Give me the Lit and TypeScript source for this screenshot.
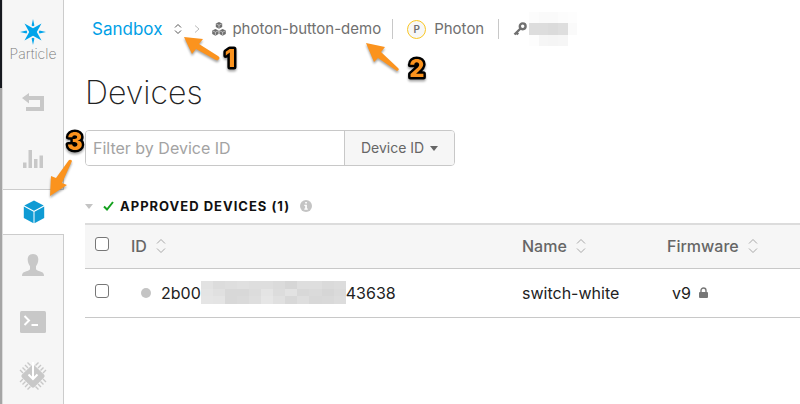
import { LitElement, html, css } from "lit";
import { customElement, property } from "lit/decorators.js";

type Cell = { tone: number };

const particleStar = html`<svg viewBox="0 0 26 26" width="26" height="26" fill="#00a4ea" aria-hidden="true">
  <path d="M4.500 4.500 13 9.200 21.500 4.500 16.800 13 21.500 21.500 13 16.800 4.500 21.500 9.200 13z"/>
  <path d="M13 0l1.400 6.500q-1.400 1.500-2.800 0zM13 26l1.400-6.500q-1.400-1.500-2.800 0zM0 13l6.500-1.400q1.500 1.400 0 2.800zM26 13l-6.500-1.400q-1.500 1.400 0 2.800z"/>
</svg>`;

const icons = {
  back: html`<svg viewBox="0 0 22 18" width="22" height="18" fill="#c8c8c8"><path d="M0 5 7 0v3h15v15H4v-4h14V7H7v3.500z"/></svg>`,
  chart: html`<svg viewBox="0 0 20 18" width="20" height="18" fill="#c8c8c8"><path d="M0 12.500h3.500V18H0zM5.500 0h3.500v18H5.500zM11 9h3.500v9H11zM16.500 5.500H20V18h-3.500z"/></svg>`,
  cube: html`<svg viewBox="0 0 22 24" width="22" height="24" fill="#0f9bd4"><path d="M11 .5 20.700 5.600 11 10.800 1.300 5.600zM.8 6.600 10.500 11.800V23.300L.8 18zM21.200 6.600 11.500 11.800V23.300L21.200 18z"/></svg>`,
  user: html`<svg viewBox="0 0 22 22" width="22" height="22" fill="#c8c8c8"><path d="M11 0c3.500 0 5.300 2.200 5.300 5.500 0 2.800-1 5-2.300 6.700v3c.5 1.200 3 1.800 5.500 2.800 1.800.7 2.500 1.800 2.500 4H0c0-2.200.7-3.300 2.500-4 2.500-1 5-1.600 5.500-2.800v-3C6.700 10.500 5.700 8.300 5.700 5.500 5.700 2.200 7.500 0 11 0z"/></svg>`,
  terminal: html`<svg viewBox="0 0 26 22" width="26" height="22"><rect width="26" height="22" rx="1.500" fill="#c8c8c8"/><path d="M4.500 5 9 9.500 4.500 14M11.500 14H18" fill="none" stroke="#fff" stroke-width="2"/></svg>`,
  chip: html`<svg viewBox="0 0 30 30" width="30" height="30"><path d="M13.500 4.500Q15 3 16.500 4.500L26 13.500Q27.500 15 26 16.500L16.500 26Q15 27.500 13.500 26L4 16.500Q2.500 15 4 13.500z" fill="#c8c8c8"/><path stroke="#c8c8c8" stroke-width="1.400" d="M9.500 1.500 12.500 4.500M7 4l3 3M4.500 6.500l3 3M2 9l3 3M20.500 1.500l-3 3M23 4l-3 3M25.500 6.500l-3 3M28 9l-3 3M9.500 28.500l3-3M7 26l3-3M4.500 23.500l3-3M2 21l3-3M20.500 28.500l-3-3M23 26l-3-3M25.500 23.500l-3-3M28 21l-3-3"/><path d="M15 1v16M10.500 13.500 15 18l4.500-4.500" fill="none" stroke="#fff" stroke-width="2"/></svg>`,
};

const arrowShape = (d: string, w: number, h: number) =>
  html`<svg viewBox="0 0 ${w} ${h}" width=${w} height=${h} fill="#fb931e" aria-hidden="true"><path d=${d}/></svg>`;

const sorter = html`<svg viewBox="0 0 10 16" width="10" height="16" fill="none" stroke="#a8a8a8" stroke-width="1" aria-hidden="true"><path d="M1 5.500 5 1.500 9 5.500M1 10.500 5 14.500 9 10.500"/></svg>`;

const cubelets = html`<svg viewBox="0 0 14 14" width="14" height="14" aria-hidden="true">
  <path fill="#6f6f6f" d="M7 0l3.200 1.500v3.600L7 6.800 3.800 5.100V1.500zM3.400 6.900l3.200 1.500V12l-3.200 1.700L.2 12V8.400zM10.600 6.900l3.200 1.500V12l-3.200 1.700L7.400 12V8.400z"/>
  <path fill="none" stroke="#fff" stroke-width=".5" d="M4.300 2 7 3.300 9.700 2M7 3.300v3M.7 8.900l2.700 1.300 2.700-1.300M3.400 10.200v3M7.900 8.900l2.700 1.300 2.700-1.300M10.600 10.200v3"/>
</svg>`;

@customElement("redacted-block")
export class RedactedBlock extends LitElement {
  @property({ attribute: false }) cells: Cell[] = [];
  @property({ type: Number }) columns = 1;
  static styles = css`
    :host { display: block; }
    .mosaic { display: grid; height: 100%; }
  `;
  render() {
    return html`<div class="mosaic" style="grid-template-columns:repeat(${this.columns},1fr)">
      ${this.cells.map((c) => html`<span style="background:rgb(${c.tone},${c.tone},${c.tone})"></span>`)}
    </div>`;
  }
}

@customElement("callout-mark")
export class CalloutMark extends LitElement {
  @property() number = "";
  static styles = css`
    :host { display: block; }
    svg { display: block; overflow: visible; }
    text {
      font: 800 24px Inter, sans-serif;
      fill: #fb931e; stroke: #000; stroke-width: 5px; stroke-linejoin: round; paint-order: stroke;
    }
  `;
  render() {
    return html`<svg width="18" height="26" viewBox="0 0 18 26"><text x="9" y="21" text-anchor="middle">${this.number}</text></svg>`;
  }
}

const tones = (list: number[]): Cell[] => list.map((tone) => ({ tone }));
const idMosaic = tones([
  226, 220, 222, 224, 222, 222, 219, 214, 222, 222, 218, 220,
  228, 224, 216, 216, 220, 228, 220, 226, 216, 218, 214, 218,
  229, 228, 216, 218, 222, 230, 224, 216, 222, 216, 217, 220,
]);
const keyMosaic = tones([
  252, 250, 250, 252, 253,
  221, 221, 219, 222, 250,
  253, 246, 245, 246, 255,
]);

@customElement("app-root")
export class AppRoot extends LitElement {
  static styles = css`
    :host {
      display: block; position: relative; min-height: 100vh; overflow: hidden;
      background: #fff; color: #222; font: 15px/20px Inter, "Noto Sans", sans-serif;
    }
    * { box-sizing: border-box; }
    svg { display: block; flex: none; }
    .shell { display: flex; min-height: 100vh; }
    .edge { flex: none; width: 2px; background: linear-gradient(#16191f 0 88px, #a5a5a5 88px); }
    .rail {
      flex: none; width: 62px; display: flex; flex-direction: column;
      background: #f6f6f6; border-right: 1px solid #ccc; border-left: 1px solid #dcdcdc;
    }
    .brand {
      display: flex; flex-direction: column; align-items: center; padding-top: 19px; height: 75px;
      color: #777; font: 200 14px/18px Inter, sans-serif; text-decoration: none;
    }
    .nav {
      display: flex; align-items: center; justify-content: center; height: 54px;
      border: 0; padding: 0; background: none;
    }
    .nav.tall { height: 60px; }
    .nav.active { height: 46px; margin-right: -1px; background: #fff; border: solid #ccc; border-width: 1px 0; }
    main { flex: 1; min-width: 0; padding: 14px 0 0 21px; }
    .crumbs { display: flex; align-items: center; height: 30px; color: #707070; }
    .team { display: flex; align-items: center; gap: 12px; padding: 0 0 0 7px; border: 0; background: none; color: #00a0e6; font: 400 17px/20px Inter, sans-serif; }
    .next { margin: 0 12px; }
    .product { display: flex; align-items: center; gap: 6px; color: #707070; text-decoration: none; }
    .bar { width: 1px; height: 20px; background: #c8c8c8; }
    .platform { display: flex; align-items: center; gap: 8px; padding: 0 14px; }
    .badge { width: 19px; height: 19px; border: 1px solid #f9c623; border-radius: 50%; background: #f7f7f7; font: 600 10px/17px Inter, sans-serif; text-align: center; }
    .bar.first { margin-left: 11px; }
    .key { display: flex; align-items: center; gap: 2px; padding-left: 14px; }
    .key redacted-block { width: 48px; height: 34px; }
    h1 { margin: 29px 0 0; color: #222; font: 200 32px/40px Inter, sans-serif; }
    .filter { display: flex; width: 370px; height: 36px; margin-top: 17px; border: 1px solid #c8c8c8; border-radius: 4px; overflow: hidden; }
    .filter input { flex: 1; min-width: 0; border: 0; padding: 0 7px; outline: 0; background: #fff; font: 16px/20px Inter, sans-serif; }
    .filter input::placeholder { color: #a3a3a3; opacity: 1; }
    .pick { position: relative; display: flex; width: 110px; border-left: 1px solid #c8c8c8; background: #f6f6f6; }
    .pick select { appearance: none; width: 100%; border: 0; padding: 0 16px; background: none; color: #666; font: 14px/20px Inter, sans-serif; }
    .pick svg { position: absolute; right: 16px; top: 15px; pointer-events: none; }
    .group { display: flex; align-items: center; gap: 10px; margin-top: 31px; height: 18px; }
    .group h2 { margin: 0; color: #111; font: 700 13px/18px Inter, sans-serif; letter-spacing: 1px; }
    .group .tick { margin-right: -4px; }
    .fold { display: flex; border: 0; padding: 0; background: none; }
    table { width: 100%; margin-top: 8px; border-collapse: collapse; table-layout: fixed; font-size: 16px; }
    th, td { padding: 0; text-align: left; border-bottom: 1px solid #c8c8c8; }
    th { height: 44px; background: #f6f6f6; border-top: 2px solid #dcdcdc; color: #666; font-weight: 500; }
    td { height: 49px; }
    .select { width: 46px; }
    .name { width: 145px; }
    .firmware { width: 133px; }
    .head, .row { display: flex; align-items: center; }
    .head { gap: 9px; }
    .dot { width: 10px; height: 10px; margin: 0 10px; border-radius: 50%; background: #c4c4c4; }
    .row redacted-block { width: 145px; height: 23px; }
    .version { gap: 8px; padding-left: 5px; }
    input[type="checkbox"] { appearance: none; display: block; width: 14px; height: 14px; margin: 0 0 4px 10px; border: 1px solid #777; border-radius: 3px; background: #fff; }
    .mark { position: absolute; pointer-events: none; filter: drop-shadow(0 2px 1px rgba(0, 0, 0, 0.35)); }
    .one { left: 184px; top: 37px; }
    .two { left: 366px; top: 43px; }
    .three { left: 50px; top: 159px; }
    .n1 { left: 221px; top: 46px; }
    .n2 { left: 408px; top: 56px; }
    .n3 { left: 66px; top: 129px; }
  `;

  render() {
    return html`
      <div class="shell">
        <div class="edge"></div>
        <nav class="rail">
          <a class="brand" href="#">${particleStar}<span>Particle</span></a>
          <button class="nav" aria-label="Back">${icons.back}</button>
          <button class="nav tall" aria-label="Analytics">${icons.chart}</button>
          <button class="nav active" aria-label="Devices">${icons.cube}</button>
          <button class="nav tall" aria-label="Team">${icons.user}</button>
          <button class="nav" aria-label="Console">${icons.terminal}</button>
          <button class="nav" aria-label="Firmware">${icons.chip}</button>
        </nav>
        <main>
          <div class="crumbs">
            <button class="team">Sandbox
              <svg viewBox="0 0 8 12" width="8" height="12" fill="none" stroke="#555"><path d="M1 4.500 4 1.500 7 4.500M1 7.500 4 10.500 7 7.500"/></svg>
            </button>
            <svg class="next" viewBox="0 0 6 8" width="6" height="8" fill="none" stroke="#bbb"><path d="M1 .5 5 4 1 7.500"/></svg>
            <a class="product" href="#">${cubelets}<span>photon-button-demo</span></a>
            <span class="bar first"></span>
            <span class="platform"><span class="badge">P</span>Photon</span>
            <span class="bar"></span>
            <span class="key">
              <svg viewBox="0 0 14 14" width="14" height="14" aria-hidden="true"><circle cx="9.700" cy="4.300" r="2.900" fill="none" stroke="#707070" stroke-width="2.400"/><path d="M7.500 6.500 1.500 12.500M3.400 10.600l1.800 1.800" stroke="#707070" stroke-width="2.400" fill="none"/></svg>
              <redacted-block .cells=${keyMosaic} .columns=${5}></redacted-block>
            </span>
          </div>
          <h1>Devices</h1>
          <div class="filter">
            <input type="text" aria-label="Filter by Device ID" placeholder="Filter by Device ID" />
            <div class="pick">
              <select aria-label="Filter field"><option>Device ID</option></select>
              <svg viewBox="0 0 8 5" width="8" height="5" fill="#666"><path d="M0 0h8L4 5z"/></svg>
            </div>
          </div>
          <div class="group">
            <button class="fold" aria-label="Collapse"><svg viewBox="0 0 8 5" width="8" height="5" fill="#c4c4c4"><path d="M0 0h8L4 5z"/></svg></button>
            <svg class="tick" viewBox="0 0 11 10" width="11" height="10" fill="none" stroke="#14a11e" stroke-width="2"><path d="M1 5.500 4 8.500 10 1"/></svg>
            <h2>APPROVED DEVICES (1)</h2>
            <svg viewBox="0 0 12 12" width="12" height="12"><circle cx="6" cy="6" r="6" fill="#c4c4c4"/><path d="M5.200 2h1.700v1.600H5.200zM4.300 4.700h2.600v3.800h.9v1.200H4.300V8.500h.9V5.900h-.9z" fill="#fff"/></svg>
          </div>
          <table>
            <thead><tr>
              <th class="select"><input type="checkbox" aria-label="Select all devices" /></th>
              <th><div class="head">ID ${sorter}</div></th>
              <th class="name"><div class="head">Name ${sorter}</div></th>
              <th class="firmware"><div class="head">Firmware ${sorter}</div></th>
            </tr></thead>
            <tbody><tr>
              <td><input type="checkbox" aria-label="Select switch-white" /></td>
              <td><div class="row"><span class="dot"></span>2b00<redacted-block .cells=${idMosaic} .columns=${12}></redacted-block>43638</div></td>
              <td>switch-white</td>
              <td><div class="row version">v9
                <svg viewBox="0 0 9 11" width="9" height="11" aria-hidden="true"><rect y="5" width="9" height="6" rx="1" fill="#777"/><path d="M2 5V3.500a2.500 2.500 0 0 1 5 0V5" fill="none" stroke="#777" stroke-width="1.400"/></svg>
              </div></td>
            </tr></tbody>
          </table>
        </main>
      </div>
      <div class="mark one">${arrowShape("M0 0 19 2 15 7 34 19Q37 21 34 23Q33 24 30 22L12 12 8 17z", 36, 24)}</div>
      <div class="mark two">${arrowShape("M0 0 19 4 15 9 32 25Q34 27 31 28L12 15 8 19z", 34, 28)}</div>
      <div class="mark three">${arrowShape("M0 37 1 17 6 19 19 1Q21 0 22 2L12 24 17 26z", 22, 37)}</div>
      <callout-mark class="mark n1" number="1"></callout-mark>
      <callout-mark class="mark n2" number="2"></callout-mark>
      <callout-mark class="mark n3" number="3"></callout-mark>
    `;
  }
}
